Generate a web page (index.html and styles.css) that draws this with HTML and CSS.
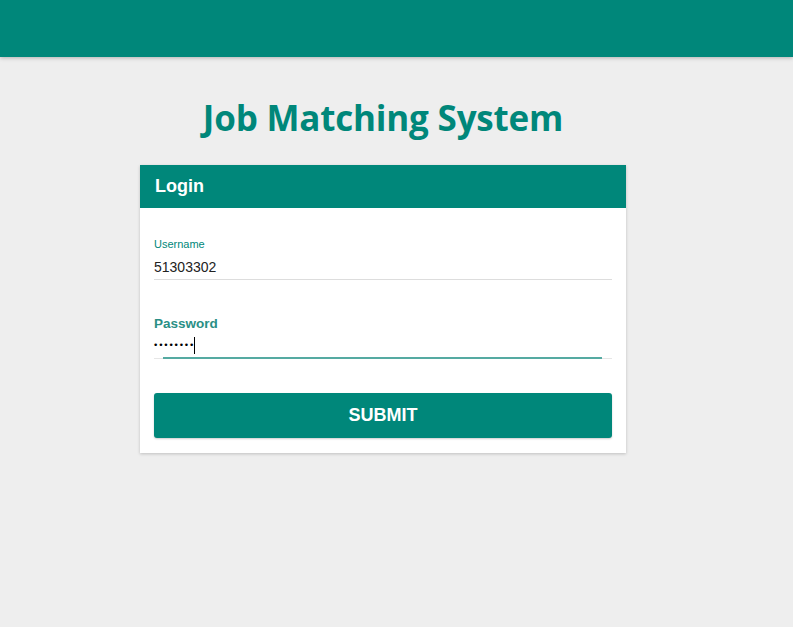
FILE: index.html
```html
<!DOCTYPE html>
<html>
<head>
<meta charset="utf-8">
<link rel="stylesheet" href="styles.css">
</head>
<body>
<header class="topbar"></header>
<main class="main">
  <h1 class="title">Job Matching System</h1>
  <section class="card">
    <div class="card-head">Login</div>
    <div class="card-body">
      <div class="field">
        <label class="label-small">Username</label>
        <div class="value">51303302</div>
        <div class="line"></div>
      </div>
      <div class="field field-pw">
        <label class="label-focus">Password</label>
        <div class="value pw"><span class="dots">••••••••</span><span class="caret"></span></div>
        <div class="line focus"><div class="focus-bar"></div></div>
      </div>
      <button class="submit">SUBMIT</button>
    </div>
  </section>
</main>
</body>
</html>
```
FILE: styles.css
```css
html, body { margin: 0; padding: 0; }
body {
  background: #eeeeee;
  font-family: "Liberation Sans", Arial, sans-serif;
  height: 627px;
  overflow: hidden;
}
.topbar {
  height: 57px;
  background: #00877a;
  box-shadow: 0 1px 4px rgba(0,0,0,0.25);
}
.main {
  display: flex;
  flex-direction: column;
  align-items: center;
  padding-right: 27px;
}
.title {
  margin: 36px 0 0 0;
  height: 72px;
  font-family: "Open Sans", sans-serif;
  font-weight: 700;
  font-size: 35px;
  line-height: 50px;
  color: #00877a;
  letter-spacing: -0.2px;
}
.card {
  width: 486px;
  background: #fff;
  box-shadow: 0 1px 3px rgba(0,0,0,0.2);
}
.card-head {
  height: 43px;
  background: #00877a;
  color: #fff;
  font-weight: 700;
  font-size: 18px;
  line-height: 43px;
  padding-left: 15px;
}
.card-body {
  padding: 30px 14px 15px 14px;
}
.field { display: flex; flex-direction: column; }
.label-small {
  font-size: 11px;
  line-height: 12px;
  color: #00877a;
}
.value {
  font-size: 14px;
  line-height: 18px;
  margin-top: 8px;
  color: #222;
  height: 18px;
}
.line {
  height: 1px;
  background: #dddddd;
  margin-top: 3px;
}
.field-pw { margin-top: 36px; }
.label-focus {
  font-size: 13.5px;
  line-height: 16px;
  font-weight: 700;
  color: #2a8f85;
}
.pw { display: flex; align-items: center; margin-top: 4px; }
.dots { font-size: 9.5px; letter-spacing: 1.8px; color: #000; }
.caret { width: 1px; height: 17px; background: #000; margin-left: -1px; }
.line.focus {
  margin-top: 3px;
  position: relative;
  background: transparent;
  border-bottom: 1px solid #e6e6e6;
  height: 1px;
}
.focus-bar {
  position: absolute;
  left: 9px;
  right: 10px;
  top: 0;
  height: 2px;
  background: #55aaa2;
}
.submit {
  display: block;
  width: 100%;
  height: 45px;
  margin-top: 34px;
  border: none;
  border-radius: 3px;
  background: #00877a;
  color: #fff;
  font-family: "Liberation Sans", Arial, sans-serif;
  font-weight: 700;
  font-size: 18px;
  box-shadow: 0 1px 2px rgba(0,0,0,0.2);
}
```
